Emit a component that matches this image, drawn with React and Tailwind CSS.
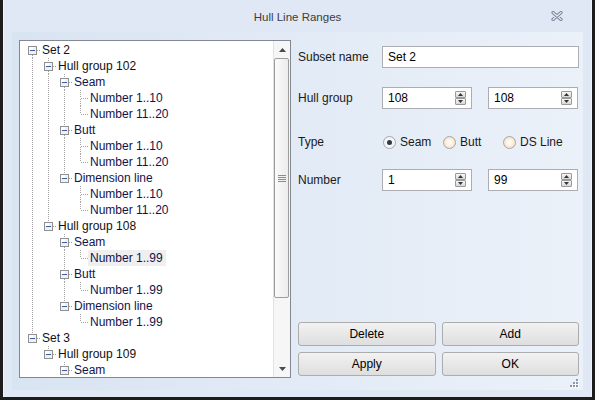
import React from 'react'

const numbers = (list) => list.map((label) => ({ label }))

const tree = [
  {
    label: 'Set 2',
    children: [
      {
        label: 'Hull group 102',
        children: [
          { label: 'Seam', children: numbers(['Number 1..10', 'Number 11..20']) },
          { label: 'Butt', children: numbers(['Number 1..10', 'Number 11..20']) },
          { label: 'Dimension line', children: numbers(['Number 1..10', 'Number 11..20']) },
        ],
      },
      {
        label: 'Hull group 108',
        children: [
          { label: 'Seam', children: [{ label: 'Number 1..99', selected: true }] },
          { label: 'Butt', children: numbers(['Number 1..99']) },
          { label: 'Dimension line', children: numbers(['Number 1..99']) },
        ],
      },
    ],
  },
  {
    label: 'Set 3',
    // the rest of Set 3 is scrolled out of view
    children: [{ label: 'Hull group 109', children: [{ label: 'Seam', children: [] }] }],
  },
]

// walk the tree into rows, remembering which ancestor levels still need a guide line
function flatten(nodes, depth = 0, guides = [], out = []) {
  nodes.forEach((node, i) => {
    const hasNext = i < nodes.length - 1
    out.push({ ...node, depth, guides, hasNext, first: depth === 0 && i === 0 })
    if (node.children) flatten(node.children, depth + 1, [...guides, hasNext], out)
  })
  return out
}

const dot = { stroke: '#a3a3a3', strokeDasharray: '1 1' }

function Guide({ pipe }) {
  return (
    <svg width="16" height="16" className="shrink-0" shapeRendering="crispEdges">
      {pipe && <line x1="8.5" y1="0" x2="8.5" y2="16" {...dot} />}
    </svg>
  )
}

function Connector({ row }) {
  const expander = !!row.children
  return (
    <svg width="16" height="16" className="shrink-0" shapeRendering="crispEdges">
      {!row.first && <line x1="8.5" y1="0" x2="8.5" y2={expander ? 4 : 8} {...dot} />}
      {row.hasNext && <line x1="8.5" y1={expander ? 13 : 9} x2="8.5" y2="16" {...dot} />}
      <line x1={expander ? 13 : 9} y1="8.5" x2="16" y2="8.5" {...dot} />
      {expander && (
        <>
          <rect x="4.5" y="4.5" width="8" height="8" fill="#f1f1f1" stroke="#8f8f8f" />
          <rect x="5" y="5" width="4" height="3" fill="#ffffff" />
          <line x1="6" y1="8.5" x2="11" y2="8.5" stroke="#3a5ba6" />
        </>
      )}
    </svg>
  )
}

function TreeRow({ row }) {
  const color = row.depth < 2 ? 'text-[#111111]' : 'text-[#12124e]'
  return (
    <div className="flex h-4 items-center whitespace-nowrap">
      {row.guides.map((g, i) => (
        <Guide key={i} pipe={g} />
      ))}
      <Connector row={row} />
      <span className={`px-[2px] text-[12px] leading-4 ${color} ${row.selected ? 'bg-[#efefef] pr-[3px]' : ''}`}>
        {row.label}
      </span>
    </div>
  )
}

function Arrow({ up, w = 7, h = 4, color = '#4a4a4a' }) {
  return (
    <svg width={w} height={h}>
      <polygon points={up ? `0,${h} ${w / 2},0 ${w},${h}` : `0,0 ${w / 2},${h} ${w},0`} fill={color} />
    </svg>
  )
}

function ScrollBar() {
  return (
    <div className="flex w-[17px] shrink-0 flex-col border-l border-[#e2e2e2] bg-[#f6f6f6]">
      <div className="flex h-[17px] items-center justify-center pt-[1px]">
        <Arrow up />
      </div>
      <div className="flex-1 pr-[1px]">
        <div className="flex h-[240px] flex-col items-center justify-center gap-[1px] rounded-[2px] border border-[#9d9d9d] bg-gradient-to-r from-[#fbfbfb] to-[#ececec]">
          <div className="h-px w-[8px] bg-[#8c8c8c]" />
          <div className="h-px w-[8px] bg-[#8c8c8c]" />
          <div className="h-px w-[8px] bg-[#8c8c8c]" />
          <div className="h-px w-[8px] bg-[#8c8c8c]" />
        </div>
      </div>
      <div className="flex h-[17px] items-center justify-center">
        <Arrow />
      </div>
    </div>
  )
}

function SpinBtn({ up }) {
  return (
    <div className="flex h-[7px] w-[11px] items-center justify-center rounded-[1px] border border-[#9a9a9a] bg-gradient-to-b from-[#f8f8f8] to-[#d7d7d7]">
      <Arrow up={up} w={5} h={3} color="#333333" />
    </div>
  )
}

function Spin({ value }) {
  return (
    <div className="flex h-[22px] w-[90px] items-center border border-[#abadb3] bg-white pl-[5px] pr-[5px]">
      <span className="flex-1 text-[12px] text-black">{value}</span>
      <div className="flex flex-col">
        <SpinBtn up />
        <SpinBtn />
      </div>
    </div>
  )
}

function Radio({ label, checked }) {
  return (
    <div className="flex w-[60px] items-center gap-[4px]">
      <div
        className={`flex h-[13px] w-[13px] items-center justify-center rounded-full border border-[#a6a6a6] ${
          checked ? 'bg-[#f3f5f8]' : 'bg-radial from-[#fffaf4] from-20% to-[#f0d5b4]'
        }`}
      >
        {checked && <div className="h-[5px] w-[5px] rounded-full bg-[#2f3a4f]" />}
      </div>
      <span className="text-[12px] text-[#1a1a1a]">{label}</span>
    </div>
  )
}

function Button({ children }) {
  return (
    <button className="flex h-[24px] items-center justify-center rounded-[3px] border border-[#acacac] bg-gradient-to-b from-[#f2f2f2] to-[#dedede] text-[12px] text-black">
      {children}
    </button>
  )
}

function Field({ label, children, className = '' }) {
  return (
    <div className={`flex h-[22px] items-center ${className}`}>
      <span className="w-[84px] shrink-0 text-[12px] text-[#1a1a1a]">{label}</span>
      {children}
    </div>
  )
}

export default function App() {
  const rows = flatten(tree)

  return (
    <div className="h-[400px] w-[595px] bg-[#1c1c1c] px-[3px] pb-[3px] font-['Liberation_Sans',Arial,sans-serif]">
      <div className="flex h-[397px] flex-col border-x border-[#eef3f9] bg-[#dfe8f4] px-[8px]">
        {/* title bar */}
        <div className="grid h-[32px] grid-cols-[1fr_auto_1fr] items-center">
          <div />
          <span className="pt-[3px] text-[11.5px] text-[#3c3c3c]">Hull Line Ranges</span>
          <div className="flex justify-end pr-[20px]">
            <svg width="12" height="10" viewBox="0 0 12 10">
              <path d="M2 1.5 L10 8.5 M10 1.5 L2 8.5" stroke="#74849a" strokeWidth="3.2" strokeLinecap="round" />
              <path d="M2 1.5 L10 8.5 M10 1.5 L2 8.5" stroke="#e8eef7" strokeWidth="1.2" strokeLinecap="round" />
            </svg>
          </div>
        </div>

        {/* client area */}
        <div className="flex h-[358px] flex-col bg-gradient-to-r from-[#d9e4f2] to-[#ebf1f9] pl-[7px] pr-[4px] pt-[8px]">
          <div className="flex h-[338px] gap-[7px]">
            <div className="flex w-[272px] border border-[#828790] bg-white">
              <div className="flex-1 overflow-hidden pl-[4px] pt-[1px]">
                {rows.map((row, i) => (
                  <TreeRow key={i} row={row} />
                ))}
              </div>
              <ScrollBar />
            </div>

            <div className="flex w-[281px] flex-col pb-[2px] pt-[6px]">
              <Field label="Subset name">
                <div className="flex h-[22px] flex-1 items-center border border-[#abadb3] bg-white pl-[5px] text-[12px] text-black">
                  Set 2
                </div>
              </Field>
              <Field label="Hull group" className="mt-[19px]">
                <div className="flex gap-[16px]">
                  <Spin value="108" />
                  <Spin value="108" />
                </div>
              </Field>
              <Field label="Type" className="mt-[22px]">
                <div className="flex pl-[1px]">
                  <Radio label="Seam" checked />
                  <Radio label="Butt" />
                  <Radio label="DS Line" />
                </div>
              </Field>
              <Field label="Number" className="mt-[16px]">
                <div className="flex gap-[16px]">
                  <Spin value="1" />
                  <Spin value="99" />
                </div>
              </Field>

              <div className="mt-auto grid grid-cols-2 gap-[6px]">
                <Button>Delete</Button>
                <Button>Add</Button>
                <Button>Apply</Button>
                <Button>OK</Button>
              </div>
            </div>
          </div>

          {/* size grip */}
          <div className="flex h-[12px] justify-end pt-[1px]">
            <svg width="10" height="9" shapeRendering="crispEdges">
              {[
                [8, 1],
                [5, 4],
                [8, 4],
                [2, 7],
                [5, 7],
                [8, 7],
              ].map(([x, y], i) => (
                <g key={i}>
                  <rect x={x} y={y} width="2" height="2" fill="#ffffff" />
                  <rect x={x - 1} y={y - 1} width="2" height="2" fill="#8d98a8" />
                </g>
              ))}
            </svg>
          </div>
        </div>
      </div>
    </div>
  )
}
